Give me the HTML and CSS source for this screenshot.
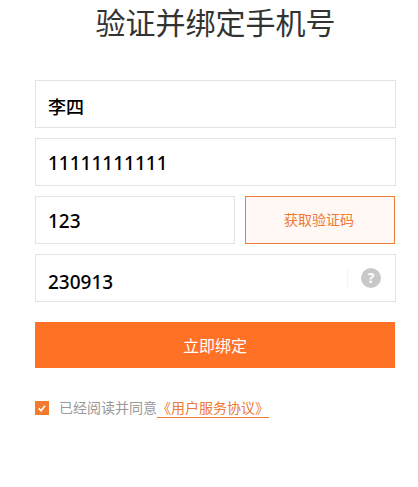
FILE: index.html
```html
<!DOCTYPE html>
<html lang="zh">
<head>
<meta charset="utf-8">
<title>验证并绑定手机号</title>
<link rel="stylesheet" href="styles.css">
</head>
<body>
<main class="page">
  <h1 class="title">验证并绑定手机号</h1>
  <form class="form">
    <div class="field"><span class="value name">李四</span></div>
    <div class="field"><span class="value">11111111111</span></div>
    <div class="row">
      <div class="field code"><span class="value">123</span></div>
      <button type="button" class="send">获取验证码</button>
    </div>
    <div class="field captcha">
      <span class="value low">230913</span>
      <span class="divider"></span>
      <span class="help">?</span>
    </div>
    <button type="button" class="submit">立即绑定</button>
    <div class="agree">
      <span class="check"><svg viewBox="0 0 14 14" width="14" height="14"><path d="M3.8 7.4l2.2 2.4 4-5" fill="none" stroke="#fff" stroke-width="1.7"/></svg></span>
      <span class="agree-text">已经阅读并同意<a class="link">《用户服务协议》</a></span>
    </div>
  </form>
</main>
</body>
</html>
```
FILE: styles.css
```css
* { box-sizing: border-box; }
html, body { margin: 0; background: #fff; }
body {
  width: 418px;
  height: 487px;
  overflow: hidden;
  font-family: "Noto Sans", "Noto Sans CJK SC", sans-serif;
}
.page { padding: 0 22px 0 35px; }
.title {
  margin: 0;
  height: 80px;
  font-size: 30px;
  line-height: 42px;
  font-weight: 400;
  color: #333;
  text-align: center;
  font-family: "Noto Sans CJK SC", sans-serif;
}
.form { display: flex; flex-direction: column; gap: 10px; }
.field {
  display: flex;
  align-items: center;
  height: 48px;
  padding: 0 12px;
  border: 1px solid #e3e3e3;
  background: #fff;
}
.value {
  font-size: 19px;
  font-weight: 500;
  color: #000;
  position: relative;
  top: 1px;
}
.name {
  font-size: 18px;
  top: 2px;
}
.low { top: 4px; }
.row { display: flex; gap: 10px; }
.code { width: 200px; }
.send {
  width: 150px;
  height: 48px;
  padding: 0 2px 2px 0;
  border: 1px solid #ed7d3a;
  background: #fff8f4;
  color: #ee7a35;
  font-size: 14px;
  font-weight: 400;
  font-family: "Noto Sans CJK SC", sans-serif;
}
.divider {
  width: 1px;
  height: 20px;
  margin-left: auto;
  background: #f6f6f6;
}
.help {
  width: 20px;
  height: 20px;
  margin: 0 2px 0 13px;
  border-radius: 50%;
  background: #c8c8c8;
  color: #fff;
  font-size: 14px;
  font-weight: 700;
  line-height: 20px;
  text-align: center;
}
.submit {
  width: 360px;
  height: 46px;
  margin-top: 10px;
  padding: 0;
  border: 0;
  background: #ff7125;
  color: #fff;
  font-size: 16px;
  font-family: "Noto Sans CJK SC", sans-serif;
}
.agree {
  display: flex;
  align-items: flex-start;
  gap: 10px;
  margin-top: 12px;
  height: 40px;
}
.check {
  display: block;
  width: 14px;
  height: 14px;
  margin-top: 11px;
  background: #f47a2e;
}
.check svg { display: block; }
.agree-text {
  margin-top: 7px;
  font-size: 14px;
  line-height: 20px;
  color: #999;
  font-family: "Noto Sans CJK SC", sans-serif;
  font-weight: 400;
}
.link {
  color: #ee7a35;
  border-bottom: 1px solid #ee7a35;
}
```
